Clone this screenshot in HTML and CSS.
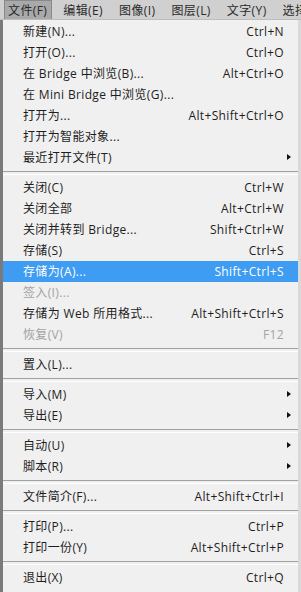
FILE: index.html
```html
<!DOCTYPE html>
<html lang="zh-CN">
<head>
<meta charset="utf-8">
<link rel="stylesheet" href="styles.css">
</head>
<body>
<div class="menubar">
  <span class="mb-item active">文件(F)</span>
  <span class="mb-item">编辑(E)</span>
  <span class="mb-item">图像(I)</span>
  <span class="mb-item">图层(L)</span>
  <span class="mb-item">文字(Y)</span>
  <span class="mb-item">选择</span>
</div>
<div class="menu">
  <div class="row"><span class="label">新建(N)...</span><span class="key">Ctrl+N</span></div>
  <div class="row"><span class="label">打开(O)...</span><span class="key">Ctrl+O</span></div>
  <div class="row"><span class="label">在 Bridge 中浏览(B)...</span><span class="key">Alt+Ctrl+O</span></div>
  <div class="row"><span class="label">在 Mini Bridge 中浏览(G)...</span><span class="key"></span></div>
  <div class="row"><span class="label">打开为...</span><span class="key">Alt+Shift+Ctrl+O</span></div>
  <div class="row"><span class="label">打开为智能对象...</span><span class="key"></span></div>
  <div class="row sub"><span class="label">最近打开文件(T)</span><span class="key"></span></div>
  <div class="sep"></div>
  <div class="row"><span class="label">关闭(C)</span><span class="key">Ctrl+W</span></div>
  <div class="row"><span class="label">关闭全部</span><span class="key">Alt+Ctrl+W</span></div>
  <div class="row"><span class="label">关闭并转到 Bridge...</span><span class="key">Shift+Ctrl+W</span></div>
  <div class="row"><span class="label">存储(S)</span><span class="key">Ctrl+S</span></div>
  <div class="row hl"><span class="label">存储为(A)...</span><span class="key">Shift+Ctrl+S</span></div>
  <div class="row dis"><span class="label">签入(I)...</span><span class="key"></span></div>
  <div class="row"><span class="label">存储为 Web 所用格式...</span><span class="key">Alt+Shift+Ctrl+S</span></div>
  <div class="row dis"><span class="label">恢复(V)</span><span class="key">F12</span></div>
  <div class="sep"></div>
  <div class="row"><span class="label">置入(L)...</span><span class="key"></span></div>
  <div class="sep"></div>
  <div class="row sub"><span class="label">导入(M)</span><span class="key"></span></div>
  <div class="row sub"><span class="label">导出(E)</span><span class="key"></span></div>
  <div class="sep"></div>
  <div class="row sub"><span class="label">自动(U)</span><span class="key"></span></div>
  <div class="row sub"><span class="label">脚本(R)</span><span class="key"></span></div>
  <div class="sep"></div>
  <div class="row"><span class="label">文件简介(F)...</span><span class="key">Alt+Shift+Ctrl+I</span></div>
  <div class="sep"></div>
  <div class="row"><span class="label">打印(P)...</span><span class="key">Ctrl+P</span></div>
  <div class="row"><span class="label">打印一份(Y)</span><span class="key">Alt+Shift+Ctrl+P</span></div>
  <div class="sep"></div>
  <div class="row"><span class="label">退出(X)</span><span class="key">Ctrl+Q</span></div>
</div>
</body>
</html>
```

FILE: styles.css
```css
* { box-sizing: border-box; }
html, body {
  margin: 0;
  padding: 0;
  width: 301px;
  height: 592px;
  overflow: hidden;
  background: #f0f0f0;
  font-family: "Open Sans", "Noto Sans CJK SC", "DejaVu Sans", sans-serif;
  font-size: 12px;
  color: #1e1e1e;
}
.menubar {
  height: 20px;
  background: #d0d0d0;
  display: flex;
  align-items: stretch;
  padding-left: 4px;
  border-bottom: 1px solid #bdbdbd;
  white-space: nowrap;
  overflow: hidden;
}
.mb-item {
  display: flex;
  align-items: center;
  flex: 0 0 auto;
  padding: 0 4px 0 3px;
  margin-right: 7px;
  border: 1px solid transparent;
  border-bottom: none;
  color: #2a2a2a;
  font-size: 12px;
  letter-spacing: 0.4px;
}
.active {
  background: #a9a9a9;
  border-color: #8a8a8a;
}
.menu {
  height: 572px;
  background: #f0f0f0;
  border-left: 3px solid #7a7a7a;
  border-right: 3px solid #d9d9d9;
  padding-top: 1px;
  display: flex;
  flex-direction: column;
}
.row {
  height: 21px;
  flex: 0 0 21px;
  display: flex;
  align-items: center;
  justify-content: space-between;
  padding: 0 14px 0 20px;
  position: relative;
  white-space: nowrap;
  line-height: 1;
}
.key, .label { letter-spacing: 0.35px; }
.hl {
  background: #3e9cf2;
  color: #fff;
}
.dis { color: #a3a3a3; }
.sub::after {
  content: "";
  position: absolute;
  right: 7px;
  top: 7px;
  border-left: 4px solid #111;
  border-top: 3.5px solid transparent;
  border-bottom: 3.5px solid transparent;
}
.sep {
  flex: 0 0 9px;
  height: 9px;
  display: flex;
  align-items: center;
}
.sep::before {
  content: "";
  display: block;
  width: 100%;
  height: 2px;
  border-top: 1px solid #a0a0a0;
  border-bottom: 1px solid #ffffff;
}
```
